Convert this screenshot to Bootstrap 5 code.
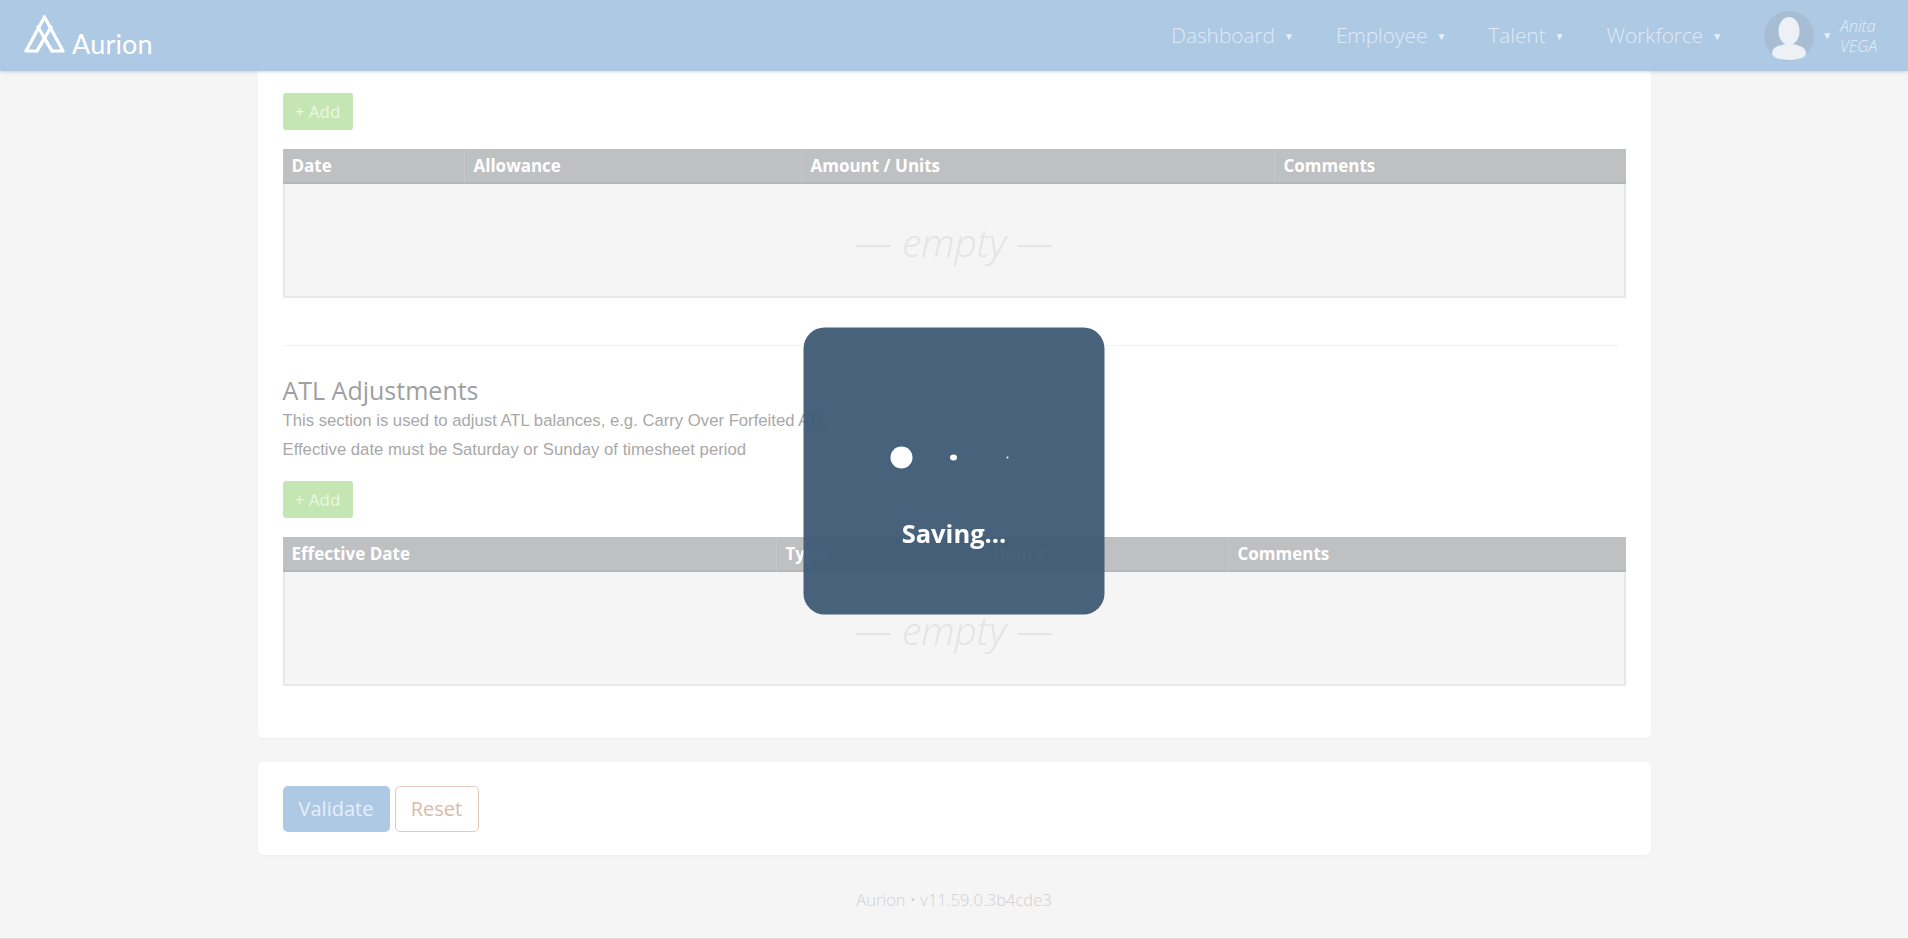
<!DOCTYPE html>
<html lang="en">
<head>
    <meta charset="UTF-8">
    <meta name="viewport" content="width=device-width, initial-scale=1.0">
    <title>Aurion</title>
    <link rel="stylesheet" href="https://cdn.jsdelivr.net/npm/bootstrap@5.3.3/dist/css/bootstrap.min.css">
    <script src="https://cdn.jsdelivr.net/npm/bootstrap@5.3.3/dist/js/bootstrap.bundle.min.js"></script>
    <style>
        html, body { height: 939px; overflow: hidden; }
        body {
            background: #f5f5f5;
            font-family: "Open Sans", sans-serif;
            color: #8f8f8f;
            border-bottom: 1px solid #dcdcdc;
        }
        .top-bar {
            height: 71px;
            background: #aec9e4;
            padding: 0 31px 0 24px;
            box-shadow: 0 1px 3px rgba(120,140,160,.35);
            position: relative;
            z-index: 2;
        }
        .logo-mark { margin-top: -4px; }
        .logo-word {
            color: #fff;
            font-family: "Lato", sans-serif;
            font-weight: 400;
            font-size: 27px;
            line-height: 1;
            margin: 15px 0 0 7px;
            letter-spacing: .2px;
        }
        .menu-item {
            color: #dfeaf5;
            font-weight: 300;
            font-size: 20.8px;
            margin-right: 42px;
            white-space: nowrap;
        }
        .menu-caret { font-size: 10px; margin-left: 9px; color: #e9f0f8; vertical-align: 3px; }
        .user-name {
            color: #e3edf7;
            font-size: 16px;
            font-style: italic;
            font-weight: 300;
            line-height: 20px;
            margin-left: 8px;
        }
        .page-wrap { width: 1393px; margin: 0 auto; }
        .sheet { background: #fff; border-radius: 0 0 5px 5px; box-shadow: 0 1px 2px rgba(0,0,0,.03); }
        .sheet-main { height: 667px; padding: 22px 25px 0; }
        .sheet-actions { height: 93px; margin-top: 24px; padding: 24px 25px; border-radius: 5px; }
        .btn-add {
            background: #c4e6b3;
            border: 0;
            border-radius: 3px;
            color: #ecf7e5;
            font-size: 17px;
            width: 70px;
            height: 37px;
            padding: 0;
        }
        .btn-add-low { margin-top: 17px; }
        .grid-table { width: 1343px; table-layout: fixed; border-collapse: separate; border-spacing: 0; margin-top: 19px; }
        .grid-table th {
            background: #bfc0c2;
            color: #fff;
            font-size: 17px;
            font-weight: 700;
            height: 35px;
            padding: 0 9px;
            border-bottom: 2px solid #b6b7b9;
            border-right: 1px solid #c6c7c9;
        }
        .grid-table th:last-child { border-right: 0; }
        .grid-table td {
            background: #f5f5f5;
            height: 114px;
            padding: 4px 0 0;
            border: 2px solid #e8e8e8;
            border-top: 0;
            text-align: center;
            color: #e4e4e4;
            font-size: 39px;
            font-style: italic;
            font-weight: 300;
        }
        .w-date { width: 182px; }
        .w-allow { width: 337px; }
        .w-amount { width: 473px; }
        .w-effective { width: 494px; }
        .w-type { width: 207px; }
        .w-hours { width: 245px; }
        .divider { border-top: 1px solid #f3f3f3; margin: 47px 0 28px; width: 1336px; }
        .section-title { font-size: 25px; font-weight: 400; line-height: 32px; color: #a0a0a0; margin: 0; }
        .section-note {
            font-family: "Liberation Sans", sans-serif;
            font-size: 16.7px;
            line-height: 29px;
            color: #a8a8a8;
            margin: 0;
        }
        .btn-validate {
            background: #aec9e4;
            border: 0;
            border-radius: 5px;
            color: #e6eff8;
            font-size: 20px;
            width: 107px;
            height: 46px;
            padding: 0;
        }
        .btn-reset {
            background: #fff;
            border: 1px solid #e6c9bd;
            border-radius: 5px;
            color: #dcb9ab;
            font-size: 20px;
            width: 84px;
            height: 46px;
            padding: 0;
            margin-left: 5px;
        }
        .foot-line { text-align: center; color: #d0d0d0; font-size: 16.5px; font-weight: 300; margin-top: 33px; }
        .saving-box {
            width: 301px;
            height: 287px;
            margin-top: 1px;
            background: rgba(62,90,117,.95);
            border-radius: 21px;
            z-index: 5;
        }
        .saving-text { color: #fff; font-size: 25.5px; font-weight: 700; text-align: center; padding-top: 190px; line-height: 30px; }
        .dot { background: #fff; border-radius: 50%; position: absolute; top: 130px; transform: translate(-50%, -50%); }
        .dot-big { left: 98px; width: 22px; height: 22px; }
        .dot-mid { left: 150px; width: 7px; height: 6px; }
        .dot-tiny { left: 204px; width: 2px; height: 2px; }
    </style>
</head>
<body>
    <!-- Top bar -->
    <nav class="top-bar d-flex align-items-center justify-content-between">
        <div class="d-flex align-items-center">
            <svg class="logo-mark" width="41" height="38" viewBox="0 0 41 38" fill="none" stroke="#fff" stroke-width="3.2" stroke-linejoin="round" stroke-linecap="round">
                <path d="M20.5 2 L39 36 H28 L14 12"/>
                <path d="M20.5 2 L2 36 H13 L27 12"/>
                <path d="M13 36 L20.5 23 L28 36"/>
            </svg>
            <span class="logo-word">Aurion</span>
        </div>
        <div class="d-flex align-items-center">
            <span class="menu-item">Dashboard<span class="menu-caret">▼</span></span>
            <span class="menu-item">Employee<span class="menu-caret">▼</span></span>
            <span class="menu-item">Talent<span class="menu-caret">▼</span></span>
            <span class="menu-item">Workforce<span class="menu-caret">▼</span></span>
            <svg width="50" height="50" viewBox="0 0 50 50">
                <circle cx="25" cy="25" r="25" fill="#a6bdd4"/>
                <ellipse cx="25" cy="20" rx="10.5" ry="14" fill="#edf1f5"/>
                <path d="M8 42 C8 36 17 33 25 33 C33 33 42 36 42 42 C42 47 33 49 25 49 C17 49 8 47 8 42 Z" fill="#edf1f5"/>
            </svg>
            <span class="menu-caret ms-2 me-0">▼</span>
            <div class="user-name">Anita<br>VEGA</div>
        </div>
    </nav>

    <div class="page-wrap">
        <div class="sheet sheet-main">
            <button class="btn-add">+ Add</button>
            <table class="grid-table mb-0">
                <thead>
                    <tr>
                        <th class="w-date">Date</th>
                        <th class="w-allow">Allowance</th>
                        <th class="w-amount">Amount / Units</th>
                        <th>Comments</th>
                    </tr>
                </thead>
                <tbody>
                    <tr><td colspan="4">— empty —</td></tr>
                </tbody>
            </table>

            <div class="divider"></div>

            <h4 class="section-title">ATL Adjustments</h4>
            <p class="section-note">This section is used to adjust ATL balances, e.g. Carry Over Forfeited ATL</p>
            <p class="section-note">Effective date must be Saturday or Sunday of timesheet period</p>
            <button class="btn-add btn-add-low">+ Add</button>
            <table class="grid-table mb-0">
                <thead>
                    <tr>
                        <th class="w-effective">Effective Date</th>
                        <th class="w-type">Type</th>
                        <th class="w-hours">Hours</th>
                        <th>Comments</th>
                    </tr>
                </thead>
                <tbody>
                    <tr><td colspan="4">— empty —</td></tr>
                </tbody>
            </table>
        </div>

        <div class="sheet sheet-actions d-flex align-items-start">
            <button class="btn-validate">Validate</button>
            <button class="btn-reset">Reset</button>
        </div>

        <div class="foot-line">Aurion • v11.59.0.3b4cde3</div>
    </div>

    <!-- Saving overlay -->
    <div class="saving-box position-fixed top-50 start-50 translate-middle">
        <div class="dot dot-big"></div>
        <div class="dot dot-mid"></div>
        <div class="dot dot-tiny"></div>
        <div class="saving-text">Saving...</div>
    </div>
</body>
</html>
